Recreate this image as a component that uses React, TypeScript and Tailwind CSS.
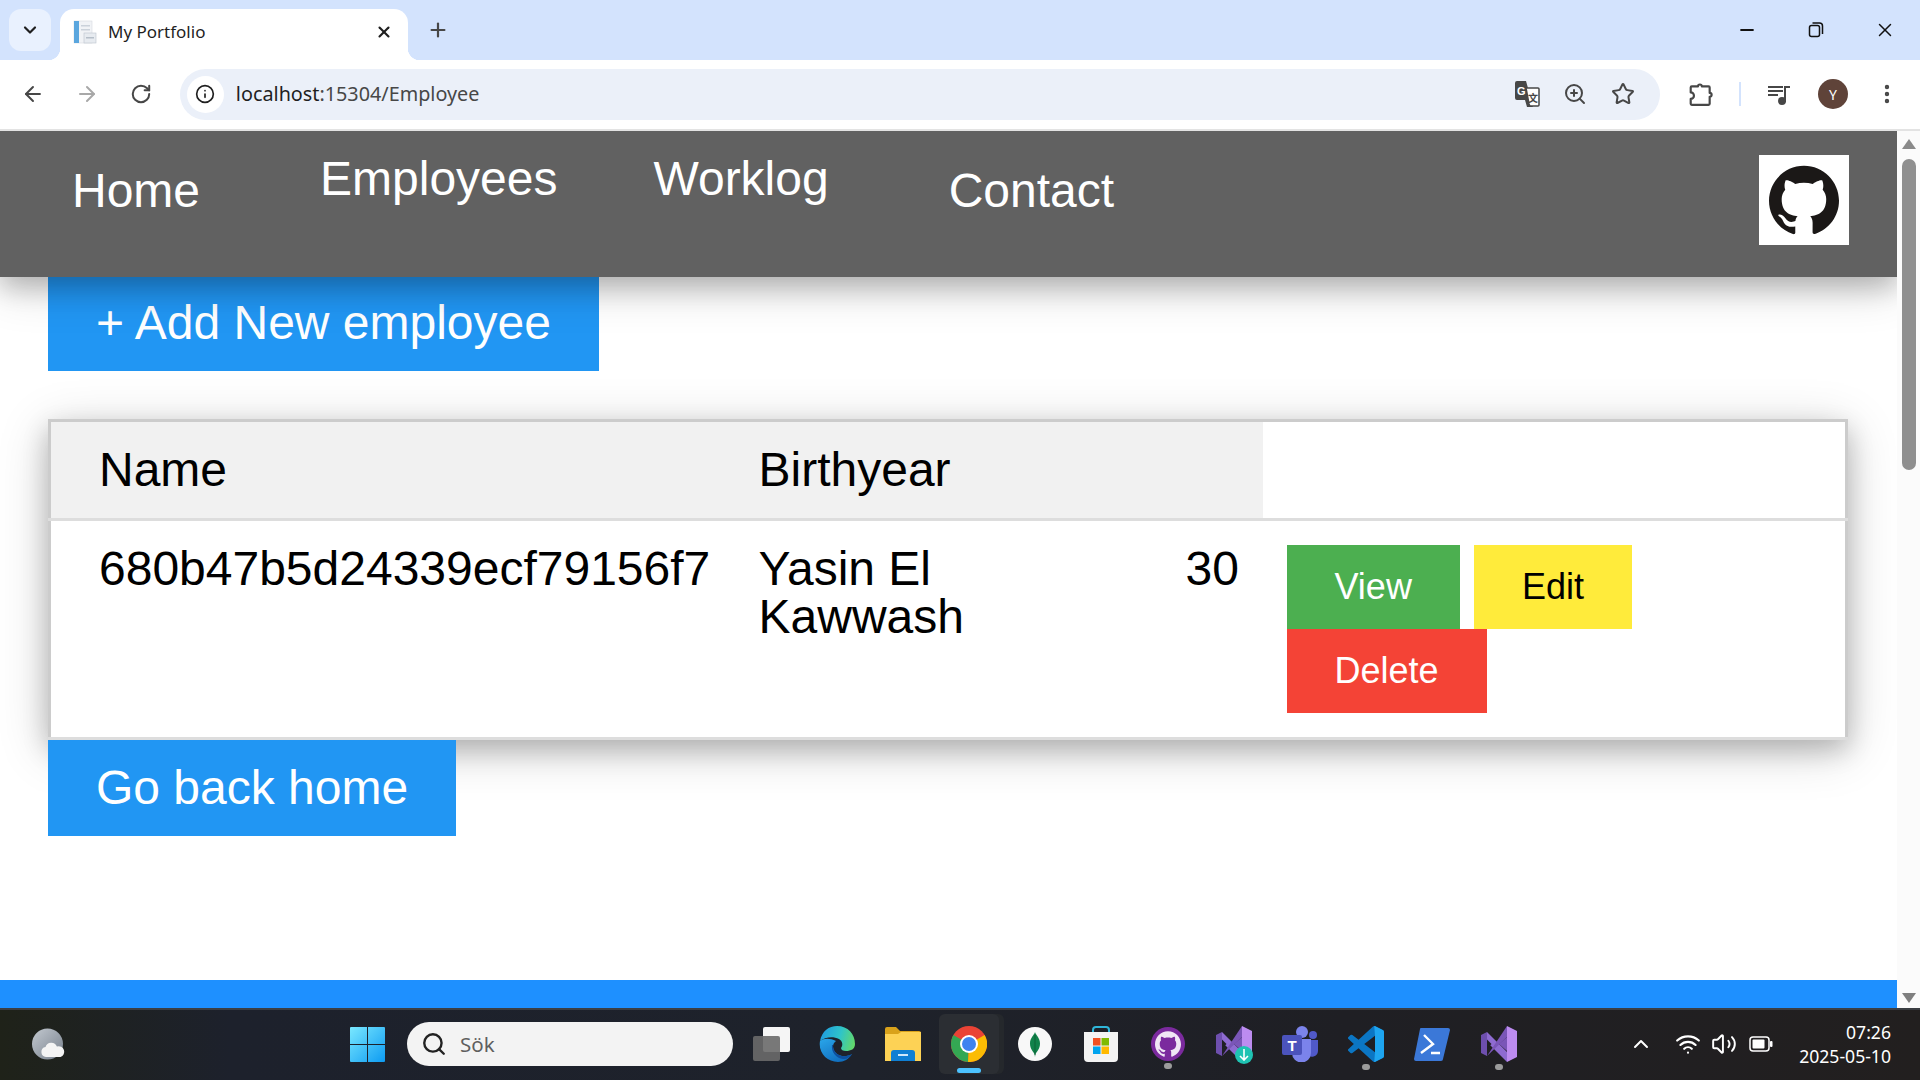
import { ArrowLeft, ArrowRight, RotateCw, Info, X, Plus, ChevronDown, Minus, Search, ChevronUp, Wifi, Volume2, ZoomIn, Star, EllipsisVertical } from "lucide-react";
import { SiGithub } from "react-icons/si";

const PAGE = "font-['Liberation_Sans',Arial,sans-serif]";
const UI = "font-['Noto_Sans',sans-serif]";

const TabFavicon = () => (
    <svg width="24" height="24" viewBox="0 0 24 24" className="shrink-0">
        <rect x="1" y="1" width="18" height="22" fill="#f1f3f6" stroke="#d6dadf" strokeWidth="0.6" />
        <rect x="1" y="1" width="5" height="22" fill="#5aa6de" />
        <rect x="8" y="5" width="9" height="1.5" fill="#cbd2da" />
        <rect x="8" y="9" width="9" height="1.5" fill="#cbd2da" />
        <rect x="11" y="13" width="12" height="10" fill="#e7ebf0" stroke="#bcc4cd" strokeWidth="0.6" />
        <rect x="13" y="17" width="8" height="1.5" fill="#b5bec8" />
    </svg>
);

const TranslateIcon = () => (
    <svg width="26" height="26" viewBox="0 0 26 26">
        <path d="M1 2a2 2 0 0 1 2-2h9l7 25a1 1 0 0 1-1 1h-5l-2-7H3a2 2 0 0 1-2-2z" fill="#474747" />
        <path d="M12 7h12a1 1 0 0 1 1 1v16a1 1 0 0 1-1 1h-8l-1-2z" fill="#fff" stroke="#474747" strokeWidth="1.5" />
        <text x="3" y="14" fontSize="11" fontWeight="700" fill="#fff" fontFamily="'Liberation Sans',sans-serif">G</text>
        <text x="14" y="21" fontSize="10" fontWeight="700" fill="#474747" fontFamily="'Noto Sans CJK SC',sans-serif">文</text>
    </svg>
);

const ExtensionIcon = () => (
    <svg width="26" height="26" viewBox="0 0 24 24" fill="none" stroke="#474747" strokeWidth="2" strokeLinejoin="round">
        <path d="M3.500 5H9.200a1.800 1.800 0 0 1 3.600 0H19a1 1 0 0 1 1 1v5a1.800 1.800 0 0 1 0 3.600V21a1 1 0 0 1-1 1H3.500a1 1 0 0 1-1-1v-4.500a3 3 0 0 0 0-6V6a1 1 0 0 1 1-1z" />
    </svg>
);

const MediaIcon = () => (
    <svg width="24" height="24" viewBox="0 0 24 24" fill="none" stroke="#474747" strokeWidth="2">
        <path d="M1 5h15M1 9h15M1 13h10M18 20V5h5" />
        <circle cx="15" cy="19" r="3" fill="#474747" />
    </svg>
);

const TabStrip = () => (
    <div className="flex h-[60px] shrink-0 bg-[#d3e3fd] pl-[9px] pt-[9px]">
        <div className="flex h-[42px] w-[42px] items-center justify-center rounded-[12px] bg-[#e9f1fe]">
            <ChevronDown size={20} strokeWidth={2.6} color="#1f1f1f" />
        </div>
        <div className="relative ml-[9px] flex h-[51px] w-[348px] items-center rounded-t-[14px] bg-white pb-[5px] pl-[13px] pr-[15px]">
            <TabFavicon />
            <span className={`ml-[11px] flex-1 text-[17px] text-[#1f1f1f] ${UI}`}>My Portfolio</span>
            <X size={18} strokeWidth={2.8} color="#1f1f1f" />
            <div className="absolute bottom-0 left-[-12px] h-[12px] w-[12px] bg-[radial-gradient(circle_at_0_0,#d3e3fd_12px,#ffffff_12.5px)]"></div>
            <div className="absolute bottom-0 right-[-12px] h-[12px] w-[12px] bg-[radial-gradient(circle_at_100%_0,#d3e3fd_12px,#ffffff_12.5px)]"></div>
        </div>
        <div className="ml-[19px] flex h-[42px] items-center">
            <Plus size={22} strokeWidth={2.4} color="#474747" />
        </div>
        <div className="ml-auto flex h-[42px] items-center pr-[24px]">
            <Minus size={20} strokeWidth={2.6} color="#111" />
            <svg width="16" height="16" viewBox="0 0 16 16" fill="none" stroke="#111" strokeWidth="1.5" className="ml-[51px]">
                <rect x="1.500" y="3.500" width="10" height="11" rx="2" />
                <path d="M4.500 1h7a3 3 0 0 1 3 3v8" />
            </svg>
            <X size={22} strokeWidth={1.6} color="#111" className="ml-[50px]" />
        </div>
    </div>
);

const Toolbar = () => (
    <div className="flex h-[71px] shrink-0 items-center rounded-t-[12px] border-b-2 border-[#e3e3e3] bg-white pb-[1px] pl-[21px] pr-[21px]">
        <ArrowLeft size={24} strokeWidth={2} color="#474747" />
        <ArrowRight size={24} strokeWidth={2} color="#a8a8a8" className="ml-[30px]" />
        <RotateCw size={22} strokeWidth={2.2} color="#474747" className="ml-[31px]" />
        <div className="ml-[28px] flex h-[51px] w-[1483px] items-center rounded-full bg-[#ebf0f9] pl-[7px] pr-[25px]">
            <div className="flex h-[37px] w-[37px] items-center justify-center rounded-full bg-white">
                <Info size={20} strokeWidth={2} color="#1f1f1f" />
            </div>
            <span className={`ml-[12px] flex-1 text-[19.8px] text-[#474747] ${UI}`}>
                <span className="text-[#1f1f1f]">localhost</span>:15304/Employee
            </span>
            <TranslateIcon />
            <ZoomIn size={24} strokeWidth={2} color="#474747" className="ml-[23px]" />
            <Star size={24} strokeWidth={2} color="#474747" className="ml-[24px]" />
        </div>
        <div className="ml-[28px]"><ExtensionIcon /></div>
        <div className="ml-[25px] h-[24px] w-[2px] bg-[#d3e3fd]"></div>
        <div className="ml-[26px]"><MediaIcon /></div>
        <div className={`ml-[27px] flex h-[30px] w-[30px] items-center justify-center rounded-full bg-[#5f4339] text-[14px] text-white ${UI}`}>Y</div>
        <EllipsisVertical size={24} strokeWidth={2.4} color="#474747" className="ml-[27px]" />
    </div>
);

const NavBar = () => (
    <nav className="relative z-10 flex h-[146px] shrink-0 justify-between bg-[#616161] pl-[72px] pr-[48px] text-[48px] leading-[55px] text-white shadow-[0_10px_24px_rgba(0,0,0,0.2),0_10px_48px_rgba(0,0,0,0.19)]">
        <div className="flex">
            <span className="pt-[32px]">Home</span>
            <span className="ml-[120px] pt-[20px]">Employees</span>
            <span className="ml-[96px] pt-[20px]">Worklog</span>
            <span className="ml-[120px] pt-[32px]">Contact</span>
        </div>
        <div className="mt-[24px] flex h-[90px] w-[90px] items-center justify-center bg-white">
            <SiGithub size={70} color="#1b1817" />
        </div>
    </nav>
);

const BlueButton = ({ label, className }: { label: string; className?: string }) => (
    <div className={`flex h-[96px] w-fit items-center bg-[#2196f3] px-[48px] text-[48px] text-white ${className ?? ""}`}>{label}</div>
);

const ActionButton = ({ label, className }: { label: string; className: string }) => (
    <div className={`flex h-[84px] w-fit items-center px-[48px] text-[36px] ${className}`}>{label}</div>
);

const EmployeeTable = () => (
    <table className="mt-[48px] w-[1800px] table-fixed border-collapse border-[3px] border-[#ccc] bg-white text-[48px] leading-[48px] text-black shadow-[0_10px_24px_rgba(0,0,0,0.2),0_10px_48px_rgba(0,0,0,0.19)]">
        <colgroup>
            <col className="w-[685px]" />
            <col className="w-[427px]" />
            <col className="w-[101px]" />
            <col />
        </colgroup>
        <thead>
            <tr className="border-b-[3px] border-[#ddd]">
                <th className="bg-[#f1f1f1] py-[24px] pl-[48px] pr-[24px] text-left font-normal">Name</th>
                <th className="bg-[#f1f1f1] px-[24px] py-[24px] text-left font-normal">Birthyear</th>
                <th className="bg-[#f1f1f1]"></th>
                <th></th>
            </tr>
        </thead>
        <tbody>
            <tr className="border-b-[3px] border-[#ddd]">
                <td className="py-[24px] pl-[48px] pr-[24px] align-top">680b47b5d24339ecf79156f7</td>
                <td className="px-[24px] py-[24px] align-top">Yasin El Kawwash</td>
                <td className="py-[24px] pl-[24px] align-top">30</td>
                <td className="px-[24px] py-[24px] align-top">
                    <div className="flex gap-[14px]">
                        <ActionButton label="View" className="bg-[#4caf50] text-white" />
                        <ActionButton label="Edit" className="bg-[#ffeb3b] text-black" />
                    </div>
                    <ActionButton label="Delete" className="bg-[#f44336] text-white" />
                </td>
            </tr>
        </tbody>
    </table>
);

const ScrollBar = () => (
    <div className="flex w-[23px] shrink-0 flex-col items-center bg-[#fbfbfb] pt-[8px]">
        <div className="h-0 w-0 border-x-[7px] border-b-[10px] border-x-transparent border-b-[#8a8a8a]"></div>
        <div className="mt-[10px] h-[311px] w-[14px] rounded-full bg-[#8f8f8f]"></div>
        <div className="mb-[5px] mt-auto h-0 w-0 border-x-[7px] border-t-[10px] border-x-transparent border-t-[#7f7f7f]"></div>
    </div>
);

const WeatherIcon = () => (
    <svg width="34" height="33" viewBox="0 0 34 33">
        <defs>
            <linearGradient id="moon" x1="0" y1="0" x2="1" y2="1">
                <stop offset="0" stopColor="#c3c9d0" />
                <stop offset="1" stopColor="#77808c" />
            </linearGradient>
        </defs>
        <circle cx="15.500" cy="16" r="15.500" fill="url(#moon)" />
        <path d="M14 29a5 5 0 0 1-.5-9.900 6 6 0 0 1 11.400-.6 5.300 5.300 0 0 1 3.600 10.500z" fill="#f4f4f4" />
    </svg>
);

const WindowsLogo = () => (
    <svg width="35" height="35" viewBox="0 0 35 35">
        <defs>
            <linearGradient id="win" x1="0" y1="0" x2="1" y2="1">
                <stop offset="0" stopColor="#7ae8ff" />
                <stop offset="1" stopColor="#0d9bf2" />
            </linearGradient>
        </defs>
        <path d="M0 1a1 1 0 0 1 1-1h16v17H0zM18 0h16a1 1 0 0 1 1 1v16H18zM0 18h17v17H1a1 1 0 0 1-1-1zM18 18h17v16a1 1 0 0 1-1 1H18z" fill="url(#win)" />
    </svg>
);

const TaskView = () => (
    <svg width="37" height="34" viewBox="0 0 37 34">
        <rect x="10" y="0" width="27" height="25" rx="2" fill="#f5f5f5" />
        <rect x="0" y="9" width="27" height="25" rx="2" fill="#6a6a6a" fillOpacity="0.9" />
    </svg>
);

const EdgeIcon = () => (
    <svg width="36" height="36" viewBox="0 0 36 36">
        <defs>
            <linearGradient id="edgeTop" x1="0" y1="0.4" x2="1" y2="0.6">
                <stop offset="0" stopColor="#1f9ce0" />
                <stop offset="0.55" stopColor="#2fc4c8" />
                <stop offset="1" stopColor="#63d86a" />
            </linearGradient>
            <linearGradient id="edgeLow" x1="0" y1="0" x2="0.7" y2="1">
                <stop offset="0" stopColor="#2aa6ea" />
                <stop offset="1" stopColor="#0f6cbd" />
            </linearGradient>
        </defs>
        <path d="M1 15C-1 27 8 36 19 36c6 0 11-3 14-8-5 3-12 3-16-1-4-4-4-9 0-12C11 12 5 12 1 15z" fill="url(#edgeLow)" />
        <path d="M13 19c-1 7 4 13 11 14 4 .5 7-2 9-5-5 3-12 3-16-1-2-2-3-5-3-8z" fill="#0d4f9e" />
        <path d="M1 15C3 5 10 0 18 0c11 0 18 8 18 18 0 5-4 7-9 7-3 0-5-1-5-3 2-2 2-7-2-9-6-3-14-2-19 2z" fill="url(#edgeTop)" />
    </svg>
);

const FolderIcon = () => (
    <svg width="36" height="34" viewBox="0 0 36 34">
        <path d="M0 2a2 2 0 0 1 2-2h9l4 4h19a2 2 0 0 1 2 2v6H0z" fill="#d9a21b" />
        <path d="M0 7h13l3-2h20v29H0z" fill="#fdd255" />
        <path d="M6 34v-8a3 3 0 0 1 3-3h18a3 3 0 0 1 3 3v8z" fill="#0f7fd4" />
        <rect x="13" y="27" width="10" height="2" fill="#cfe8fb" />
    </svg>
);

const ChromeIcon = () => (
    <svg width="36" height="36" viewBox="0 0 36 36">
        <circle cx="18" cy="18" r="18" fill="#ea4335" />
        <path d="M18 18L2.400 9A18 18 0 0 0 17 36z" fill="#34a853" />
        <path d="M18 18L33.600 9A18 18 0 0 1 17 36z" fill="#fbbc04" />
        <circle cx="18" cy="18" r="9" fill="#fff" />
        <circle cx="18" cy="18" r="7" fill="#3f83f0" />
    </svg>
);

const MongoIcon = () => (
    <div className="flex h-[34px] w-[34px] items-center justify-center rounded-full bg-[#f8f8f8]">
        <svg width="10" height="25" viewBox="0 0 10 25">
            <path d="M5 0c.8 3 5 6 5 11.500S6.500 20 5.500 22L5 25l-.5-3C3.500 20 0 17 0 11.500S4.200 3 5 0z" fill="#11824a" />
            <path d="M5 3v20" stroke="#0a5a33" strokeWidth="0.8" />
        </svg>
    </div>
);

const StoreIcon = () => (
    <svg width="36" height="36" viewBox="0 0 36 36">
        <path d="M10 7V4a3 3 0 0 1 3-3h10a3 3 0 0 1 3 3v3" fill="none" stroke="#2fb6d9" strokeWidth="2" />
        <path d="M1 6h34v26a4 4 0 0 1-4 4H5a4 4 0 0 1-4-4z" fill="#f3f3f3" />
        <rect x="10" y="12" width="7.500" height="7.500" fill="#f25022" />
        <rect x="18.500" y="12" width="7.500" height="7.500" fill="#7fba00" />
        <rect x="10" y="20.500" width="7.500" height="7.500" fill="#00a4ef" />
        <rect x="18.500" y="20.500" width="7.500" height="7.500" fill="#ffb900" />
    </svg>
);

const GithubDesktop = () => (
    <div className="flex h-[34px] w-[34px] items-center justify-center rounded-full bg-[#7b2a9e]">
        <SiGithub size={26} color="#f0e6f5" />
    </div>
);

const VsIcon = ({ badge }: { badge?: boolean }) => (
    <div className="relative h-[36px] w-[36px]">
        <svg width="36" height="36" viewBox="0 0 36 36">
            <path d="M0 9l6-3v24l-6-3z" fill="#6e4fae" />
            <path d="M6 6l20 20v10L6 16z" fill="#8e6bd1" />
            <path d="M6 30L26 0v11L6 30z" fill="#7a56b8" />
            <path d="M26 0l10 5v26l-10 5z" fill="#bd8cf0" />
            <path d="M26 11l-8 7 8 7z" fill="#7a56b8" />
            <path d="M6 13.500v9l4.500-4.500z" fill="#1f1f23" />
        </svg>
        {badge && (
            <div className="absolute bottom-[-2px] right-[-1px] flex h-[18px] w-[18px] items-center justify-center rounded-full bg-[#1fc3b3]">
                <svg width="10" height="12" viewBox="0 0 10 12" fill="none" stroke="#fff" strokeWidth="1.600">
                    <path d="M5 0v11M1 7l4 4 4-4" />
                </svg>
            </div>
        )}
    </div>
);

const TeamsIcon = () => (
    <svg width="36" height="36" viewBox="0 0 36 36">
        <circle cx="20" cy="6" r="6" fill="#7b83eb" />
        <circle cx="31" cy="9" r="4" fill="#5059c9" />
        <path d="M25 14h11v11a6 6 0 0 1-11 3z" fill="#5059c9" />
        <path d="M10 13h19v14a9.500 9.500 0 0 1-19 0z" fill="#7b83eb" />
        <rect x="0" y="9" width="20" height="20" rx="2" fill="#4b53bc" />
        <text x="10" y="24.500" textAnchor="middle" fontSize="15" fontWeight="700" fill="#fff" fontFamily="'Liberation Sans',sans-serif">T</text>
    </svg>
);

const VsCodeIcon = () => (
    <svg width="36" height="36" viewBox="0 0 24 24">
        <path d="M23.150 2.587L18.210.21a1.494 1.494 0 0 0-1.705.29l-9.460 8.630-4.120-3.128a.999.999 0 0 0-1.276.057L.327 7.261A1 1 0 0 0 .326 8.740L3.899 12 .326 15.260a1 1 0 0 0 .001 1.479L1.650 17.940a.999.999 0 0 0 1.276.057l4.120-3.128 9.460 8.630a1.492 1.492 0 0 0 1.704.29l4.942-2.377A1.500 1.500 0 0 0 24 20.060V3.939a1.500 1.500 0 0 0-.85-1.352zm-5.146 14.861L10.826 12l7.178-5.448v10.896z" fill="#0b76c4" />
        <path d="M17.500.05c.25 0 .5.05.7.16l4.950 2.380A1.500 1.500 0 0 1 24 3.940v16.120a1.500 1.500 0 0 1-.85 1.350l-4.940 2.380a1.500 1.500 0 0 1-.7.16L18 17.450V6.550z" fill="#1ea5f0" />
    </svg>
);

const PowerShellIcon = () => (
    <svg width="36" height="34" viewBox="0 0 36 34">
        <path d="M7 1h27a2 2 0 0 1 2 2l-7 29a2 2 0 0 1-2 2H2a2 2 0 0 1-2-2L6 2a1 1 0 0 1 1-1z" fill="#3b78d8" />
        <path d="M10 8l9 9-12 9M17 26h9" fill="none" stroke="#fff" strokeWidth="2.400" />
    </svg>
);

// fixed slots so the icons keep the reference's spacing from the search box onward
const Taskbar = () => (
    <div className="flex h-[72px] shrink-0 items-center border-t-2 border-[#3b3e42] bg-[linear-gradient(90deg,#1f2219_0%,#1d212c_12%,#1e222b_45%,#1f1f24_70%,#221f1f_100%)] pb-[2px] pl-[32px] pr-[29px]">
        <WeatherIcon />
        <div className="ml-[284px]"><WindowsLogo /></div>
        <div className="ml-[22px] flex h-[44px] w-[326px] items-center rounded-full bg-[#f3f3f3] pl-[14px]">
            <Search size={26} strokeWidth={2.2} color="#222" />
            <span className={`ml-[13px] text-[20.5px] text-[#5f5f5f] ${UI}`}>Sök</span>
        </div>
        <div className="ml-[20px]"><TaskView /></div>
        <div className="ml-[29px]"><EdgeIcon /></div>
        <div className="ml-[30px]"><FolderIcon /></div>
        <div className="relative ml-[18px] flex h-[60px] w-[60px] items-center justify-center rounded-[6px] bg-[#2b2e33] shadow-[5px_0_0_#25282c]">
            <ChromeIcon />
            <div className="absolute bottom-[1px] left-[18px] h-[5px] w-[24px] rounded-full bg-[#4cc2ff]"></div>
        </div>
        <div className="ml-[19px]"><MongoIcon /></div>
        <div className="ml-[31px]"><StoreIcon /></div>
        <div className="relative ml-[32px]">
            <GithubDesktop />
            <div className="absolute bottom-[-8px] left-[13px] h-[6px] w-[8px] rounded-full bg-[#9b9b9b]"></div>
        </div>
        <div className="ml-[31px]"><VsIcon badge /></div>
        <div className="ml-[30px]"><TeamsIcon /></div>
        <div className="relative ml-[30px]">
            <VsCodeIcon />
            <div className="absolute bottom-[-8px] left-[14px] h-[6px] w-[8px] rounded-full bg-[#9b9b9b]"></div>
        </div>
        <div className="ml-[30px]"><PowerShellIcon /></div>
        <div className="relative ml-[31px]">
            <VsIcon />
            <div className="absolute bottom-[-8px] left-[14px] h-[6px] w-[8px] rounded-full bg-[#9b9b9b]"></div>
        </div>
        <ChevronUp size={24} strokeWidth={2} color="#fff" className="ml-[112px]" />
        <Wifi size={26} strokeWidth={2} color="#fff" className="ml-[22px]" />
        <Volume2 size={26} strokeWidth={1.8} color="#fff" className="ml-[10px]" />
        <svg width="24" height="16" viewBox="0 0 24 16" fill="none" className="ml-[12px]">
            <rect x="1" y="1" width="19" height="14" rx="3" stroke="#fff" strokeWidth="1.500" />
            <rect x="3.500" y="3.500" width="12" height="9" rx="1" fill="#fff" />
            <rect x="21" y="5" width="2.500" height="6" rx="1" fill="#fff" />
        </svg>
        <div className={`ml-auto flex flex-col items-end text-[17.6px] leading-[24px] text-white ${UI}`}>
            <span>07:26</span>
            <span>2025-05-10</span>
        </div>
    </div>
);

const App = () => {
    return (
        <div className="flex h-screen w-screen flex-col overflow-hidden bg-white">
            <TabStrip />
            <Toolbar />
            <div className="flex min-h-0 flex-1">
                <main className={`flex min-w-0 flex-1 flex-col overflow-hidden bg-white ${PAGE}`}>
                    <NavBar />
                    <div className="pl-[48px]">
                        <BlueButton label="+ Add New employee" className="-mt-[2px]" />
                        <EmployeeTable />
                        <BlueButton label="Go back home" />
                    </div>
                    <footer className="mt-auto h-[28px] shrink-0 bg-[#1e90ff]"></footer>
                </main>
                <ScrollBar />
            </div>
            <Taskbar />
        </div>
    );
};

export default App;
